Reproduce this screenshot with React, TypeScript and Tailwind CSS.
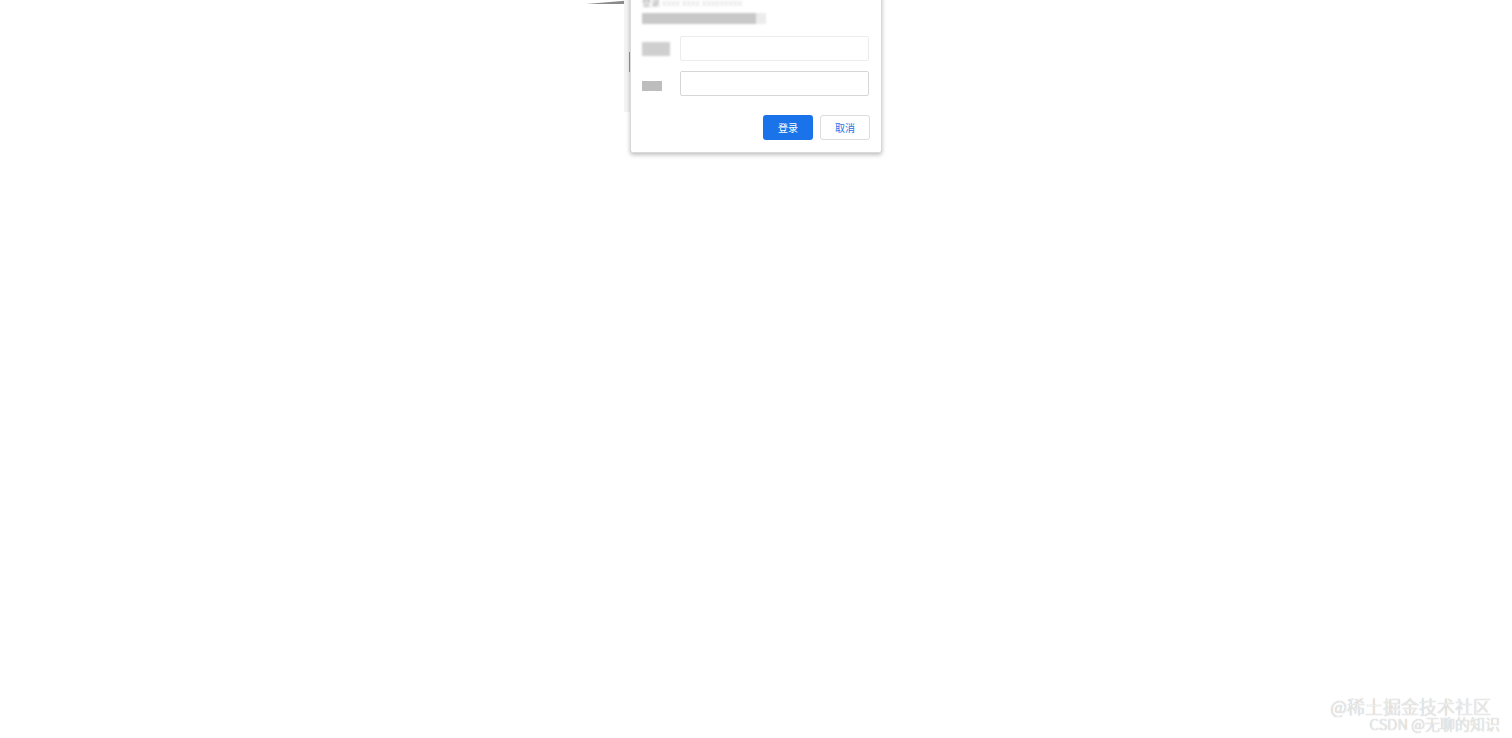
import React from 'react'

const font = '"Noto Sans CJK SC", "Liberation Sans", sans-serif'

export default function App() {
  return (
    <div className="relative w-[1512px] h-[738px] overflow-hidden bg-white" style={{ fontFamily: font }}>
      {/* left artifacts near dialog */}
      <svg className="absolute left-[586px] top-0" width="48" height="6" viewBox="0 0 48 6">
        <polygon points="0,4 48,0 48,4" fill="#8a8a8a" />
      </svg>
      <div className="absolute left-[624px] top-0 w-[9px] h-[112px] bg-[#f3f3f3]" />
      <div className="absolute left-[629px] top-[52px] w-px h-[20px] bg-[#9a9a9a]" />

      {/* dialog */}
      <div className="relative mx-auto -mt-[9px] w-[252px] bg-white border border-[#d9d9d9] rounded-b-[3px] shadow-[0_2px_4px_rgba(0,0,0,0.25)] px-[11px] pb-[12px]">
        <div className="pt-[6px] text-[9px] leading-[10px] text-[#9e9e9e] blur-[1px]">
          登录 <span className="text-[#dcdcdc]">xxxx xxxx xxxxxxxxx</span>
        </div>
        <div className="mt-[5px] flex blur-[1px]">
          <span className="bg-[#c8c8c8] w-[114px] h-[11px]" />
          <span className="bg-[#ececec] w-[10px] h-[11px]" />
        </div>

        <div className="mt-[12px] flex items-center">
          <div className="w-[38px] blur-[1px]">
            <span className="inline-block bg-[#cfcfcf] w-[28px] h-[14px] mt-[6px]" />
          </div>
          <div className="w-[189px] h-[25px] border border-[#ececec] rounded-[2px]" />
        </div>
        <div className="mt-[10px] flex items-center">
          <div className="w-[38px] blur-[0.6px]">
            <span className="inline-block bg-[#bdbdbd] w-[20px] h-[10px]" />
          </div>
          <div className="w-[189px] h-[25px] border border-[#d6d6d6] rounded-[2px]" />
        </div>

        <div className="mt-[19px] flex justify-end gap-[7px]">
          <button className="w-[50px] h-[25px] rounded-[3px] bg-[#1a73e8] text-white text-[10px] leading-none">
            登录
          </button>
          <button className="w-[50px] h-[25px] rounded-[3px] bg-white border border-[#dadce0] text-[#1a73e8] text-[10px] leading-none">
            取消
          </button>
        </div>
      </div>

      {/* watermark */}
      <div className="absolute right-[12px] bottom-[6px] flex flex-col items-end text-[#f2f2f2] font-light">
        <div className="text-[18px] leading-[18px] mr-[9px] [text-shadow:0_0_1px_#999]">@稀土掘金技术社区</div>
        <div className="text-[15px] leading-[17px] [text-shadow:0_0_1px_#999]">CSDN @无聊的知识</div>
      </div>
    </div>
  )
}
